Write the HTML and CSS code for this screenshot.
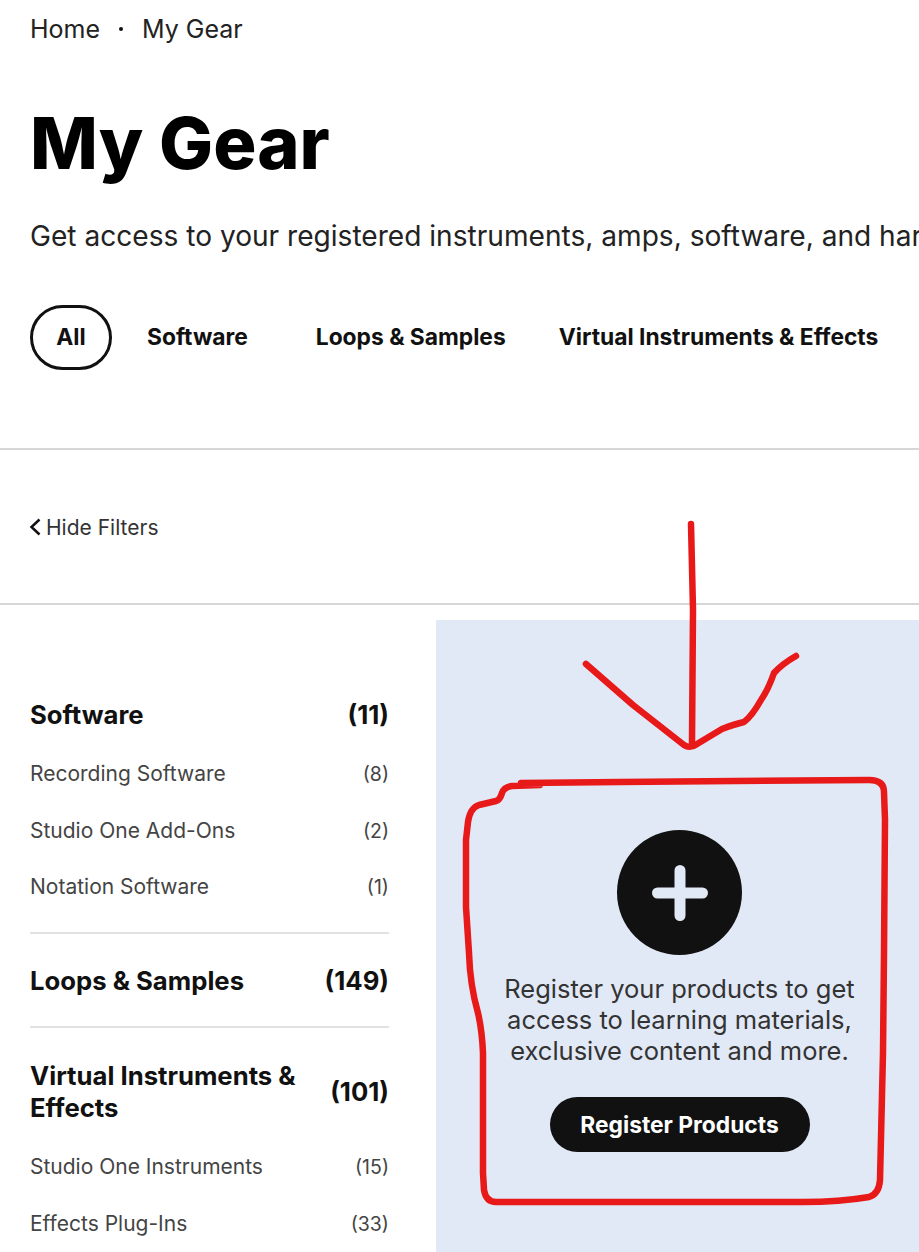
FILE: index.html
```html
<!DOCTYPE html>
<html>
	<head>
		<meta charset="UTF-8"/>
		<title>My Gear</title>
		<link rel="stylesheet" href="styles.css">
	</head>
	<body>
		<div class="page">
			<div class="crumbs"><span>Home</span><span class="dot"></span><span>My Gear</span></div>
			<h1>My Gear</h1>
			<p class="lead">Get access to your registered instruments, amps, software, and hardware</p>
			<div class="tabs">
				<a class="tab active">All</a>
				<a class="tab tab-software">Software</a>
				<a class="tab tab-loops">Loops &amp; Samples</a>
				<a class="tab">Virtual Instruments &amp; Effects</a>
			</div>
			<div class="filterbar">
				<svg class="chev" width="12" height="18" viewBox="0 0 12 18"><path d="M10.5 1.5 L2.5 9 L10.5 16.5" fill="none" stroke="#111" stroke-width="2.5"/></svg>
				<span>Hide Filters</span>
			</div>
			<div class="main">
				<div class="sidebar">
					<div class="group">
						<div class="head"><span>Software</span><span>(11)</span></div>
						<div class="item"><span>Recording Software</span><span>(8)</span></div>
						<div class="item"><span>Studio One Add-Ons</span><span>(2)</span></div>
						<div class="item"><span>Notation Software</span><span>(1)</span></div>
					</div>
					<div class="group">
						<div class="head"><span>Loops &amp; Samples</span><span>(149)</span></div>
					</div>
					<div class="group last">
						<div class="head"><span>Virtual Instruments &amp; Effects</span><span>(101)</span></div>
						<div class="item"><span>Studio One Instruments</span><span>(15)</span></div>
						<div class="item"><span>Effects Plug-Ins</span><span>(33)</span></div>
					</div>
				</div>
				<div class="panel">
					<div class="plus">
						<svg width="56" height="56" viewBox="0 0 56 56"><path d="M28 5.5 V50.5 M5.5 28 H50.5" stroke="#e2e9f6" stroke-width="11" stroke-linecap="round"/></svg>
					</div>
					<p>Register your products to get access to learning materials, exclusive content and more.</p>
					<a class="btn">Register Products</a>
				</div>
			</div>
		</div>
		<!-- red marker scribble on top of the screenshot -->
		<svg class="scribble" width="919" height="1252" viewBox="0 0 919 1252">
			<path d="M691 524 L693 610 L692 742"/>
			<path d="M586 664 L633 705 L684 745 Q690 749 697 744 L722 729 Q735 724 744 722 Q752 716 761 700 Q768 690 774 673 Q782 664 796 656"/>
			<path d="M521 783 L620 782 L869 780 Q884 780 884 792 L885 820 L884 953 L883 1053 L880 1180 Q879 1194 869 1197 Q840 1202 803 1202 L496 1202 Q486 1202 484 1190 L483 1173 L483 1053 Q482 1030 478 1013 Q470 985 469 953 L466 907 L466 840 L468 822 Q470 808 479 805 L496 801 Q500 800 502 793 Q504 787 512 786 L540 785"/>
		</svg>
	</body>
</html>
```

FILE: styles.css
```css
html, body{
	margin: 0;
	padding: 0;
	height: 1252px;
	overflow: hidden;
	background: #fff;
}
body{
	font-family: Inter, "Liberation Sans", sans-serif;
	color: #111;
	position: relative;
}
.page{
	width: 919px;
	height: 1252px;
	overflow: hidden;
}
.crumbs{
	display: flex;
	align-items: center;
	gap: 19px;
	padding: 14px 0 0 30px;
	height: 30px;
	font-size: 25px;
	line-height: 30px;
	color: #222;
}
.dot{
	width: 4px;
	height: 4px;
	border-radius: 50%;
	background: #111;
}
h1{
	margin: 57px 0 0 30px;
	font-size: 72px;
	line-height: 84px;
	font-weight: 800;
	color: #000;
}
.lead{
	margin: 34px 0 0 30px;
	font-size: 28.1px;
	line-height: 34px;
	white-space: nowrap;
	color: #222;
}
.tabs{
	display: flex;
	align-items: center;
	margin: 51px 0 0 30px;
	height: 66px;
}
.tab{
	font-size: 22.8px;
	font-weight: 700;
	white-space: nowrap;
	padding-bottom: 2px;
}
.active{
	box-sizing: border-box;
	width: 82px;
	height: 65px;
	border: 3px solid #111;
	border-radius: 33px;
	display: flex;
	align-items: center;
	justify-content: center;
}
.tab-software{ margin-left: 35px; }
.tab-loops{ margin-left: 68px; margin-right: 53px; }
.filterbar{
	display: flex;
	align-items: center;
	gap: 5px;
	margin-top: 78px;
	padding: 1px 0 0 29px;
	height: 157px;
	box-sizing: border-box;
	border-top: 2px solid #d6d6d6;
	border-bottom: 2px solid #d6d6d6;
	font-size: 21px;
	color: #333;
}
.main{
	display: flex;
	margin-top: 15px;
}
.sidebar{
	width: 359px;
	margin: 0 47px 0 30px;
	padding-top: 79px;
	flex: none;
}
.group{
	border-bottom: 2px solid #e2e2e2;
	padding: 31px 0 29px;
}
.group:first-child{ padding-top: 0; }
.group.last{ border-bottom: 0; padding-top: 32px; }
.head{
	display: flex;
	justify-content: space-between;
	align-items: center;
	font-size: 25.7px;
	line-height: 32px;
	font-weight: 700;
	gap: 30px;
}
.item{
	display: flex;
	justify-content: space-between;
	align-items: center;
	margin-top: 24.5px;
	font-size: 21px;
	line-height: 32px;
	color: #444;
}
.head + .item{ margin-top: 27px; }
.item span:last-child{ font-size: 19.5px; }
.panel{
	flex: 1;
	height: 632px;
	background: #e2e9f6;
	display: flex;
	flex-direction: column;
	align-items: center;
	padding: 210px 0 0 4px;
	box-sizing: border-box;
}
.plus{
	width: 125px;
	height: 125px;
	border-radius: 50%;
	background: #111;
	display: flex;
	align-items: center;
	justify-content: center;
}
.panel p{
	margin: 18px 0 0;
	width: 380px;
	text-align: center;
	font-size: 25.5px;
	line-height: 31px;
	color: #333;
}
.btn{
	margin-top: 31px;
	width: 260px;
	height: 55px;
	border-radius: 28px;
	background: #111;
	color: #fff;
	font-size: 22.8px;
	font-weight: 700;
	display: flex;
	align-items: center;
	justify-content: center;
}
.scribble{
	position: absolute;
	left: 0;
	top: 0;
	pointer-events: none;
}
.scribble path{
	fill: none;
	stroke: #e81919;
	stroke-width: 6.5;
	stroke-linecap: round;
	stroke-linejoin: round;
}
```
